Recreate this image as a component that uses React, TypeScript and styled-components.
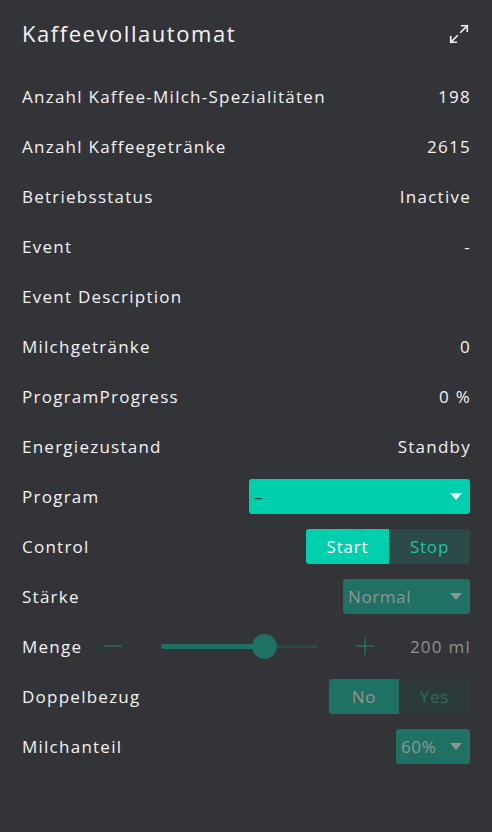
import React from "react";
import styled, { createGlobalStyle } from "styled-components";

const Global = createGlobalStyle`
  html, body { margin: 0; padding: 0; background: #333438; }
  body { font-family: "Open Sans", "DejaVu Sans", sans-serif; }
`;

const Panel = styled.div`
  width: 492px;
  min-height: 832px;
  box-sizing: border-box;
  background: #333438;
  color: #f2f2f2;
  padding: 0 22px 60px 22px;
  font-family: "Open Sans", sans-serif;
  letter-spacing: 1.25px;
`;

const Header = styled.div`
  height: 71px;
  display: flex;
  align-items: flex-start;
  justify-content: space-between;
  padding-top: 17px;
  box-sizing: border-box;
`;

const Title = styled.h1`
  margin: 0;
  font-size: 22px;
  font-weight: 500;
  line-height: 32px;
  color: #f4f4f4;
  letter-spacing: 1.55px;
`;

const ExpandBtn = styled.div`
  width: 24px;
  height: 24px;
  margin-top: 5px;
  margin-right: -1px;
  display: flex;
  align-items: center;
  justify-content: center;
  color: #f0f0f0;
`;

const Row = styled.div`
  height: 50px;
  display: flex;
  align-items: center;
  justify-content: space-between;
  font-size: 17px;
  font-weight: 500;
`;

const Label = styled.span`
  color: #f2f2f2;
  white-space: nowrap;
`;

const Value = styled.span`
  color: #f2f2f2;
  margin-right: -1px;
`;

const Select = styled.div<{ $width: number; $active?: boolean }>`
  width: ${(p) => p.$width}px;
  height: 35px;
  box-sizing: border-box;
  border-radius: 3px;
  background: ${(p) => (p.$active ? "#00cfae" : "#1f7163")};
  color: ${(p) => (p.$active ? "#1e3a36" : "#8f9593")};
  display: flex;
  align-items: center;
  justify-content: space-between;
  padding: 0 6px 0 5px;
  font-size: 17px;
  letter-spacing: 0.6px;
`;

const Caret = styled.span<{ $color: string }>`
  width: 0;
  height: 0;
  border-left: 6px solid transparent;
  border-right: 6px solid transparent;
  border-top: 7px solid ${(p) => p.$color};
  margin-right: 2px;
`;

const Segmented = styled.div`
  display: flex;
  height: 35px;
  border-radius: 3px;
  overflow: hidden;
`;

const SegButton = styled.div<{ $width: number; $bg: string; $fg: string }>`
  width: ${(p) => p.$width}px;
  display: flex;
  align-items: center;
  justify-content: center;
  background: ${(p) => p.$bg};
  color: ${(p) => p.$fg};
  font-size: 17px;
  letter-spacing: 0.8px;
`;

const SliderWrap = styled.div`
  display: flex;
  align-items: center;
  flex: 1;
  margin-left: 20px;
`;

const IconBox = styled.div`
  width: 22px;
  height: 22px;
  display: flex;
  align-items: center;
  justify-content: center;
  color: #1f7163;
`;

const Track = styled.div`
  position: relative;
  width: 157px;
  height: 3px;
  margin: 0 36px 0 37px;
  background: #234f49;
  border-radius: 2px;
`;

const Fill = styled.div`
  position: absolute;
  left: 0;
  top: -1px;
  height: 5px;
  border-radius: 3px;
  background: #1f7163;
`;

const Thumb = styled.div`
  position: absolute;
  top: 50%;
  width: 25px;
  height: 25px;
  margin-left: -12.5px;
  margin-top: -12.5px;
  border-radius: 50%;
  background: #1f7163;
`;

const Amount = styled.span`
  margin-left: auto;
  color: #8f9090;
  font-size: 17px;
  margin-right: -1px;
`;

const Minus = () => (
  <svg width="20" height="20" viewBox="0 0 20 20">
    <line x1="1" y1="10" x2="19" y2="10" stroke="currentColor" strokeWidth="1.5" />
  </svg>
);
const Plus = () => (
  <svg width="20" height="20" viewBox="0 0 20 20">
    <line x1="1" y1="10" x2="19" y2="10" stroke="currentColor" strokeWidth="1.5" />
    <line x1="10" y1="1" x2="10" y2="19" stroke="currentColor" strokeWidth="1.5" />
  </svg>
);

const Expand = () => (
  <svg width="22" height="22" viewBox="0 0 24 24" fill="none" stroke="currentColor" strokeWidth="1.8" strokeLinecap="square">
    <polyline points="15 3 21 3 21 9" />
    <polyline points="9 21 3 21 3 15" />
    <line x1="21" y1="3" x2="14" y2="10" />
    <line x1="3" y1="21" x2="10" y2="14" />
  </svg>
);

const info: [string, string][] = [
  ["Anzahl Kaffee-Milch-Spezialitäten", "198"],
  ["Anzahl Kaffeegetränke", "2615"],
  ["Betriebsstatus", "Inactive"],
  ["Event", "-"],
  ["Event Description", ""],
  ["Milchgetränke", "0"],
  ["ProgramProgress", "0 %"],
  ["Energiezustand", "Standby"],
];

export default function App() {
  const pct = 0.66;
  return (
    <>
      <Global />
      <Panel>
        <Header>
          <Title>Kaffeevollautomat</Title>
          <ExpandBtn>
            <Expand />
          </ExpandBtn>
        </Header>
        {info.map(([l, v]) => (
          <Row key={l}>
            <Label>{l}</Label>
            <Value>{v}</Value>
          </Row>
        ))}
        <Row>
          <Label>Program</Label>
          <Select $width={221} $active>
            <span>–</span>
            <Caret $color="#ffffff" />
          </Select>
        </Row>
        <Row>
          <Label>Control</Label>
          <Segmented>
            <SegButton $width={83} $bg="#00cfae" $fg="#ffffff">Start</SegButton>
            <SegButton $width={81} $bg="#2c4a47" $fg="#1cc4a4">Stop</SegButton>
          </Segmented>
        </Row>
        <Row>
          <Label>Stärke</Label>
          <Select $width={127}>
            <span>Normal</span>
            <Caret $color="#8f9593" />
          </Select>
        </Row>
        <Row>
          <Label>Menge</Label>
          <SliderWrap>
            <IconBox>
              <Minus />
            </IconBox>
            <Track>
              <Fill style={{ width: `${pct * 100}%` }} />
              <Thumb style={{ left: `${pct * 100}%` }} />
            </Track>
            <IconBox>
              <Plus />
            </IconBox>
            <Amount>200 ml</Amount>
          </SliderWrap>
        </Row>
        <Row>
          <Label>Doppelbezug</Label>
          <Segmented>
            <SegButton $width={70} $bg="#1f7163" $fg="#8f9593">No</SegButton>
            <SegButton $width={71} $bg="#2c3b3a" $fg="#2d6b60">Yes</SegButton>
          </Segmented>
        </Row>
        <Row>
          <Label>Milchanteil</Label>
          <Select $width={74}>
            <span>60%</span>
            <Caret $color="#8f9593" />
          </Select>
        </Row>
      </Panel>
    </>
  );
}
